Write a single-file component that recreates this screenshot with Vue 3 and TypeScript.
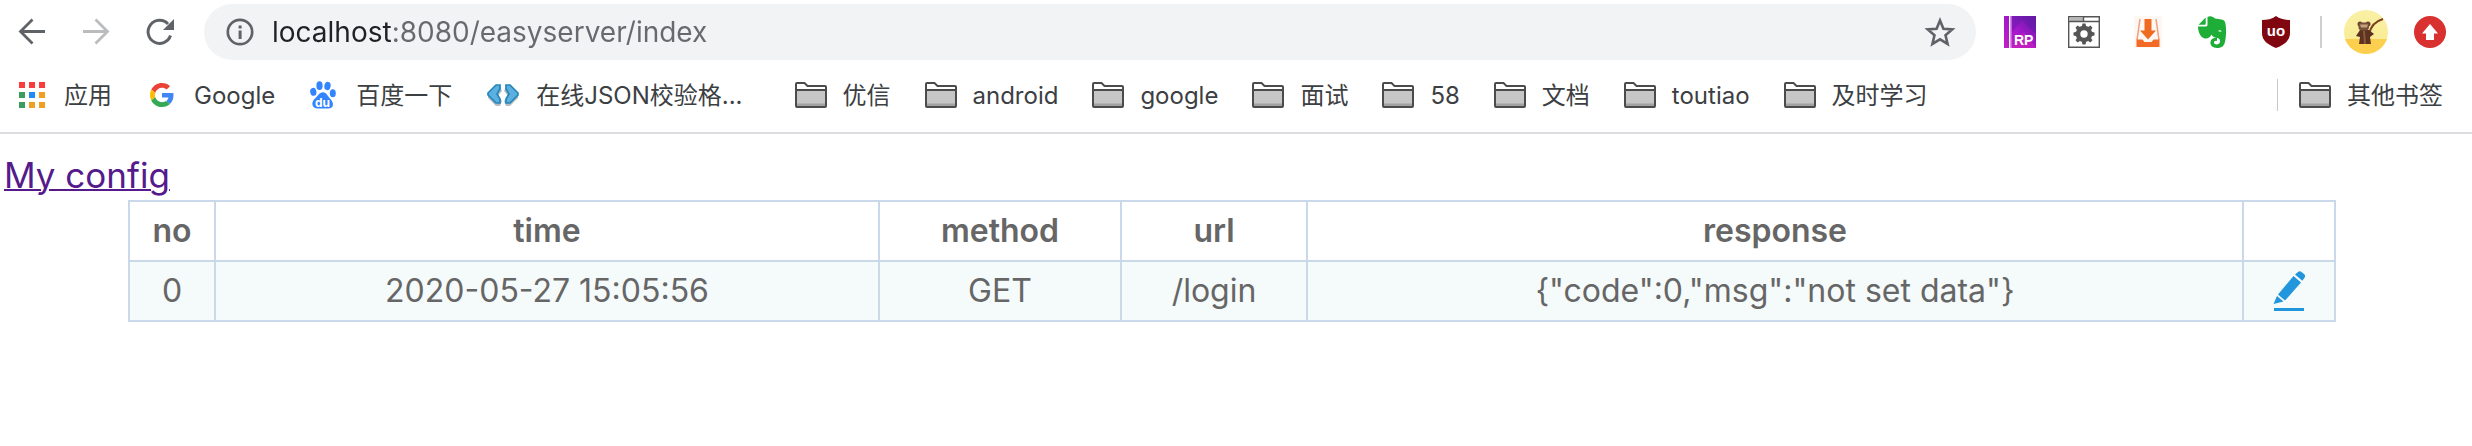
<script setup lang="ts">
import { ref } from 'vue'

type Bookmark = { label: string; icon: 'apps' | 'google' | 'baidu' | 'json' | 'folder' }
type LogRow = { no: number; time: string; method: string; url: string; response: string }

const address = ref('localhost:8080/easyserver/index')

const sites: Bookmark[] = [
  { label: '应用', icon: 'apps' },
  { label: 'Google', icon: 'google' },
  { label: '百度一下', icon: 'baidu' },
  { label: '在线JSON校验格...', icon: 'json' },
]

const folders: string[] = ['优信', 'android', 'google', '面试', '58', '文档', 'toutiao', '及时学习']

const rows: LogRow[] = [
  { no: 0, time: '2020-05-27 15:05:56', method: 'GET', url: '/login', response: '{"code":0,"msg":"not set data"}' },
]

const gridColors = ['#fa3c3c', '#fa3c3c', '#fa3c3c', '#3a9c5e', '#1e8cf5', '#f0a020', '#3a9c5e', '#f0a020', '#f0a020']
const gearTeeth = [0, 45, 90, 135, 180, 225, 270, 315]
</script>

<template>
  <div class="window">
    <header class="chrome">
      <div class="toolbar">
        <nav class="nav">
          <button type="button" class="icon-btn" aria-label="Back">
            <svg viewBox="0 0 32 32"><path d="M29 15.500H5M16.500 3.500L4.500 15.500l12 12" fill="none" stroke="#5f6368" stroke-width="2.800" /></svg>
          </button>
          <button type="button" class="icon-btn" aria-label="Forward" disabled>
            <svg viewBox="0 0 32 32"><path d="M3 15.500h24M15.500 3.500l12 12-12 12" fill="none" stroke="#babcbe" stroke-width="2.800" /></svg>
          </button>
          <button type="button" class="icon-btn" aria-label="Reload">
            <svg viewBox="0 0 32 32">
              <path d="M26.500 19.500A11.500 11.500 0 1 1 24 8" fill="none" stroke="#5f6368" stroke-width="3" />
              <path d="M30 3v11H19z" fill="#5f6368" />
            </svg>
          </button>
        </nav>

        <form class="address" @submit.prevent>
          <button type="button" class="icon-btn" aria-label="Site information">
            <svg viewBox="0 0 32 32">
              <circle cx="16" cy="16" r="12.200" fill="none" stroke="#5f6368" stroke-width="2.700" />
              <path d="M14.600 14.500h3V23h-3zM14.600 9.500h3v3h-3z" fill="#5f6368" />
            </svg>
          </button>
          <input v-model="address" class="url" type="text" aria-label="Address" spellcheck="false" />
          <button type="button" class="icon-btn" aria-label="Bookmark this page">
            <svg viewBox="0 0 32 32"><path d="M16 4.500l3.400 8.200 8.900.700-6.800 5.800 2.100 8.700L16 23.300l-7.600 4.600 2.100-8.700-6.800-5.800 8.900-.700z" fill="none" stroke="#5f6368" stroke-width="2.600" /></svg>
          </button>
        </form>

        <div class="extensions">
          <button type="button" class="icon-btn" aria-label="Axure RP">
            <svg viewBox="0 0 32 32">
              <defs>
                <linearGradient id="rp" x1="0" y1="1" x2="1" y2="0"><stop offset="0" stop-color="#c41fc4" /><stop offset=".5" stop-color="#a318cb" /><stop offset="1" stop-color="#5c1a9e" /></linearGradient>
              </defs>
              <path d="M0 0h32v32H0z" fill="url(#rp)" />
              <path d="M8 16L18 4l14 14V8L24 0H8z" fill="#5e1ca8" opacity=".45" />
              <path d="M8 32l12-16 12 16z" fill="#d324b8" opacity=".5" />
              <path d="M5 0h1.500v32H5z" fill="#fff" />
              <path d="M7.500 0H8v32h-.500z" fill="#e6a0ee" />
              <text x="10" y="29" font-size="14" font-weight="700" fill="#fff">RP</text>
            </svg>
          </button>
          <button type="button" class="icon-btn" aria-label="Page settings">
            <svg viewBox="0 0 32 32">
              <path d="M.700.700h30.600v30.600H.700z" fill="#fff" stroke="#555" stroke-width="1.400" />
              <path d="M1.500 1.500H15v3.500H1.500z" fill="#b8b8b8" />
              <path d="M1 5.500h30M15.500 1v4" stroke="#555" stroke-width="1.400" />
              <circle cx="16" cy="18" r="6" fill="none" stroke="#555" stroke-width="4.600" />
              <path v-for="a in gearTeeth" :key="a" d="M13.800 10.500l.7-3h3l.7 3z" fill="#555" :transform="`rotate(${a} 16 18)`" />
            </svg>
          </button>
          <button type="button" class="icon-btn" aria-label="Downloads">
            <svg viewBox="0 0 32 32">
              <path d="M2 0h28v32H2z" fill="#fdf8f4" />
              <path d="M8 3L5 24M24 3l3 21" stroke="#f3a184" stroke-width="1.600" />
              <path d="M4.500 23.500h6l2 2.500h7l2-2.500h6V31h-23z" fill="#f26a25" />
              <path d="M12.500 3h7v11.500H24l-8 9-8-9h4.500z" fill="#ef6b20" />
            </svg>
          </button>
          <button type="button" class="icon-btn" aria-label="Evernote">
            <svg viewBox="0 0 32 32">
              <path d="M11.500 1c3-1.600 6 0 7.500 1.600 4.500.6 9 .8 10 3.400 1.500 4.500 1.300 14.500 0 20-1 4.500-4 6-8 6-4.500 0-7-2.500-6.500-6 .5-3.400 4-4.600 6.500-4v3c-2-.500-3.300.500-3 2 .6 2 5.300 2 6-1 .4-2-.5-3.500-2.500-4-3-.600-5-1-6-3.500-1 3-4.500 5-8 3.500C3.500 20.200 2 14 2 10.500h7.800c1.200 0 1.700-.600 1.700-1.700z" fill="#1ead37" />
              <path d="M2.500 8.700L9.700 1.500v6.300c0 .6-.3.900-.9.900z" fill="#1ead37" />
              <path d="M22 15.200c.6-1.300 3-1.200 3.600.500z" fill="#fff" />
            </svg>
          </button>
          <button type="button" class="icon-btn" aria-label="uBlock Origin">
            <svg viewBox="0 0 32 32">
              <path d="M16 0c4 3 9 4 14 4v13c0 8-6 11.500-14 15C8 28.500 2 25 2 17V4c5 0 10-1 14-4z" fill="#800610" />
              <text x="16" y="20" font-size="15" font-weight="700" text-anchor="middle" fill="#fff">uo</text>
            </svg>
          </button>
        </div>
        <span class="divider"></span>
        <button type="button" class="icon-btn avatar" aria-label="Profile">
          <svg viewBox="0 0 44 44">
            <defs>
              <clipPath id="face"><circle cx="22" cy="22" r="22" /></clipPath>
              <linearGradient id="sky" x1="0" y1="0" x2="0" y2="1"><stop offset="0" stop-color="#faf0a4" /><stop offset="1" stop-color="#f8eb90" /></linearGradient>
            </defs>
            <g clip-path="url(#face)">
              <path d="M0 0h44v44H0z" fill="url(#sky)" />
              <path d="M0 29h44v15H0z" fill="#fdcf4e" />
              <path d="M25 24c2-9 7-13 14-15" fill="none" stroke="#7b3f22" stroke-width="2" />
              <path d="M16 20h9l5 4-4 3 1 7H15l1-7-4-1z" fill="#5c3220" />
              <circle cx="16" cy="14" r="2.500" fill="#6b4430" /><circle cx="24" cy="14" r="2.500" fill="#6b4430" />
              <rect x="14.500" y="12.500" width="10.500" height="8" rx="3.500" fill="#75503a" />
              <path d="M16 14.500h8l-1 3h-6z" fill="#c5a17c" />
              <path d="M20 21l1 13" stroke="#8c5734" stroke-width="2" />
            </g>
          </svg>
        </button>
        <button type="button" class="icon-btn" aria-label="Update available">
          <svg viewBox="0 0 32 32">
            <circle cx="16" cy="16" r="16" fill="#d93030" />
            <path d="M16 8l8 9.500h-4V24h-8v-6.500H8z" fill="#fff" />
          </svg>
        </button>
      </div>

      <nav class="bookmarks">
        <a v-for="s in sites" :key="s.label" href="#" class="bookmark" :class="s.icon">
          <svg v-if="s.icon === 'apps'" class="glyph" viewBox="0 0 26 26">
            <rect v-for="(c, i) in gridColors" :key="i" :x="(i % 3) * 10" :y="Math.floor(i / 3) * 10" width="6" height="6" :fill="c" />
          </svg>
          <svg v-else-if="s.icon === 'google'" class="glyph" viewBox="0 0 48 48">
            <path fill="#ea4335" d="M24 9.500c3.540 0 6.710 1.220 9.210 3.600l6.850-6.850C35.900 2.380 30.470 0 24 0 14.620 0 6.510 5.380 2.560 13.220l7.980 6.190C12.430 13.720 17.740 9.500 24 9.500z" />
            <path fill="#4285f4" d="M46.980 24.550c0-1.570-.150-3.090-.380-4.550H24v9.020h12.940c-.580 2.960-2.260 5.480-4.780 7.180l7.730 6c4.510-4.180 7.090-10.360 7.090-17.650z" />
            <path fill="#fbbc05" d="M10.530 28.590c-.480-1.450-.760-2.990-.760-4.590s.270-3.140.760-4.590l-7.980-6.190C.920 16.460 0 20.120 0 24c0 3.880.920 7.540 2.560 10.780l7.970-6.190z" />
            <path fill="#34a853" d="M24 48c6.480 0 11.930-2.130 15.890-5.810l-7.730-6c-2.150 1.450-4.920 2.300-8.160 2.300-6.260 0-11.570-4.220-13.470-9.910l-7.980 6.190C6.510 42.620 14.620 48 24 48z" />
          </svg>
          <svg v-else-if="s.icon === 'baidu'" class="glyph" viewBox="0 0 26 28">
            <g fill="#3385ff">
              <ellipse cx="9.500" cy="4.700" rx="3.100" ry="4.400" /><ellipse cx="17.500" cy="5" rx="3.100" ry="4.200" transform="rotate(12 17.500 5)" />
              <ellipse cx="3.300" cy="10.800" rx="3.100" ry="4" transform="rotate(-12 3.300 10.800)" /><ellipse cx="22.800" cy="12.200" rx="3" ry="4" />
              <path d="M13 11.200c3.500 0 4.500 3.800 7 6.200 4 3.800 4.500 10-2 10.200-2 0-8 0-10 0C1.500 27.500.800 20.800 5 17.400c3-2.400 4-6.200 8-6.200z" />
            </g>
            <text x="12.500" y="25.500" font-size="12" font-weight="700" text-anchor="middle" fill="#fff">du</text>
          </svg>
          <svg v-else class="glyph" viewBox="0 0 32 22">
            <path d="M8 3h5l2 4-4 5 4 5-2 5H9l-8-8v-3zM24 3h-5l-2 4 4 5-4 5 2 5h4l8-8v-3z" fill="#b9bcc0" />
            <path d="M9 1h4v4l-3 5 3 5v4H9l-8-8V9zM23 1h-4v4l3 5-3 5v4h4l8-8V9z" fill="#5bb0e0" stroke="#2485bb" stroke-width="1.700" />
          </svg>
          <span class="label">{{ s.label }}</span>
        </a>
        <a v-for="f in folders" :key="f" href="#" class="bookmark folder">
          <svg class="glyph" viewBox="0 0 32 26">
            <path d="M1 8h30v16H1z" fill="#c6c6c6" /><path d="M1 21.500h30V24H1z" fill="#a2a2a2" />
            <path d="M1 24V2q0-1 1-1h7.500l3 3H30q1 0 1 1v19q0 1-1 1H2q-1 0-1-1zM1 8h30" fill="none" stroke="#4b4b4b" stroke-width="2" />
          </svg>
          <span class="label">{{ f }}</span>
        </a>
        <a href="#" class="bookmark folder other">
          <svg class="glyph" viewBox="0 0 32 26">
            <path d="M1 8h30v16H1z" fill="#c6c6c6" /><path d="M1 21.500h30V24H1z" fill="#a2a2a2" />
            <path d="M1 24V2q0-1 1-1h7.500l3 3H30q1 0 1 1v19q0 1-1 1H2q-1 0-1-1zM1 8h30" fill="none" stroke="#4b4b4b" stroke-width="2" />
          </svg>
          <span class="label">其他书签</span>
        </a>
      </nav>
    </header>

    <main class="page">
      <a href="#config" class="config">My config</a>
      <table class="log">
        <colgroup>
          <col class="c-no" /><col class="c-time" /><col class="c-method" /><col class="c-url" /><col /><col class="c-edit" />
        </colgroup>
        <thead>
          <tr><th>no</th><th>time</th><th>method</th><th>url</th><th>response</th><th></th></tr>
        </thead>
        <tbody>
          <tr v-for="r in rows" :key="r.no">
            <td>{{ r.no }}</td>
            <td>{{ r.time }}</td>
            <td>{{ r.method }}</td>
            <td>{{ r.url }}</td>
            <td>{{ r.response }}</td>
            <td>
              <button type="button" class="edit" aria-label="Edit response">
                <svg viewBox="0 0 32 40">
                  <g fill="#2196dc">
                    <path d="M22 3.500l3-2.500q1.500-1.500 3.500 0l2.500 2q2 1.700.500 3.800L29.300 9.700z" />
                    <path d="M20.500 5l7.500 6.500L12 29.500 5 23.500z" />
                    <path d="M4 25l6.500 5.500L.500 33z" />
                    <path d="M1 37h30v3H1z" />
                  </g>
                </svg>
              </button>
            </td>
          </tr>
        </tbody>
      </table>
    </main>
  </div>
</template>

<style>
body {
  margin: 0;
  background: #fff;
}
</style>

<style scoped>
.window {
  font-family: Inter, "Noto Sans CJK SC", sans-serif;
  color: #3c4043;
}
.chrome {
  border-bottom: 2px solid #dadce0;
}
.toolbar {
  display: flex;
  align-items: center;
  height: 64px;
  padding: 0 26px 0 16px;
}
.nav,
.extensions {
  display: flex;
  gap: 32px;
}
.icon-btn {
  flex: none;
  width: 32px;
  height: 32px;
  padding: 0;
  border: 0;
  background: none;
}
.icon-btn svg,
.edit svg {
  display: block;
  width: 100%;
  height: 100%;
}
.address {
  flex: 1;
  display: flex;
  align-items: center;
  height: 56px;
  margin: 0 28px;
  padding: 0 20px;
  box-sizing: border-box;
  border-radius: 28px;
  background: #f1f3f4;
}
.url {
  flex: 1;
  min-width: 0;
  height: 40px;
  margin-left: 16px;
  padding: 0;
  border: 0;
  outline: 0;
  font: 28px/40px Inter, sans-serif;
  color: transparent;
  background: linear-gradient(90deg, #202124 120px, #66696d 120px);
  -webkit-background-clip: text;
  background-clip: text;
}
.divider {
  width: 2px;
  height: 32px;
  margin: 0 22px 0 28px;
  background: #cfcfcf;
}
.avatar {
  width: 44px;
  height: 44px;
  margin-right: 26px;
}
.bookmarks {
  display: flex;
  align-items: center;
  height: 68px;
  padding: 0 29px 0 19px;
  box-sizing: border-box;
}
.bookmark {
  display: flex;
  align-items: center;
  height: 36px;
  margin-bottom: 6px;
  color: #3c4043;
  font-size: 24px;
  line-height: 36px;
  text-decoration: none;
  white-space: nowrap;
}
.label {
  padding-top: 2px;
}
.glyph {
  flex: none;
  width: 26px;
  height: 26px;
}
.apps {
  gap: 19px;
  margin-right: 38px;
}
.google {
  gap: 20px;
  margin-right: 35px;
}
.google .glyph {
  width: 24px;
  height: 24px;
}
.baidu {
  gap: 20px;
  margin-right: 35px;
}
.baidu .glyph {
  height: 28px;
}
.json {
  gap: 17px;
  margin-right: 52px;
}
.json .glyph {
  width: 32px;
  height: 22px;
}
.folder {
  gap: 16px;
  margin-right: 34px;
}
.folder .glyph {
  width: 32px;
}
.other {
  height: 32px;
  margin-left: auto;
  margin-right: 0;
  padding-left: 21px;
  border-left: 1px solid #c6c8ca;
}
.page {
  padding: 16px 12px 0 4px;
}
.config {
  display: block;
  width: fit-content;
  font-size: 35px;
  line-height: 50px;
  color: #551a8b;
  text-decoration: underline;
  text-decoration-thickness: 2px;
}
.log {
  width: calc(100% - 248px);
  margin: 0 auto;
  border-collapse: collapse;
  table-layout: fixed;
  color: #666;
  font-size: 32px;
  line-height: 40px;
  text-align: center;
}
.log th,
.log td {
  height: 58px;
  padding: 0;
  border: 2px solid #cad9ea;
}
.log th {
  font-weight: 600;
}
.log tbody tr {
  background: #f5fafa;
}
.c-no {
  width: 86px;
}
.c-time {
  width: 664px;
}
.c-method {
  width: 242px;
}
.c-url {
  width: 186px;
}
.c-edit {
  width: 92px;
}
.edit {
  display: block;
  width: 32px;
  height: 40px;
  margin: 0 auto;
  padding: 0;
  border: 0;
  background: none;
}
</style>
